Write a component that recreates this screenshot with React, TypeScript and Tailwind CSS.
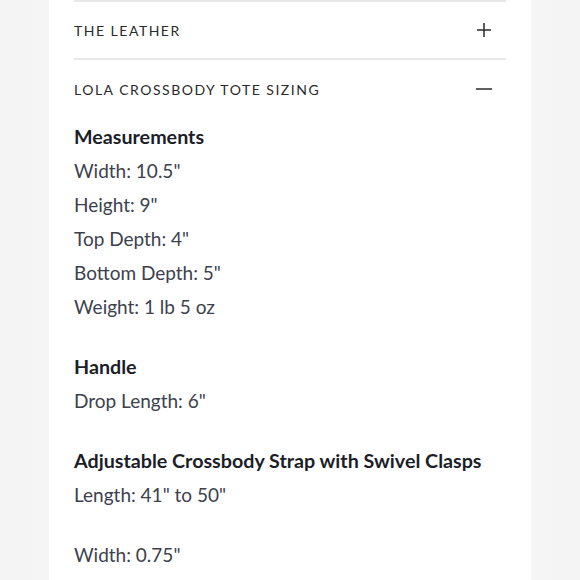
const sections = [
  {
    title: "Measurements",
    lines: ['Width: 10.5"', 'Height: 9"', 'Top Depth: 4"', 'Bottom Depth: 5"', "Weight: 1 lb 5 oz"],
  },
  { title: "Handle", lines: ['Drop Length: 6"'] },
  { title: "Adjustable Crossbody Strap with Swivel Clasps", lines: ['Length: 41" to 50"'] },
  { title: null, lines: ['Width: 0.75"'] },
];

function Plus() {
  return (
    <svg width="16" height="16" viewBox="0 0 16 16" className="text-[#2b2b2b]">
      <path d="M8 1v14M1 8h14" stroke="currentColor" strokeWidth="1.5" fill="none" />
    </svg>
  );
}

function Minus() {
  return (
    <svg width="16" height="16" viewBox="0 0 16 16" className="text-[#2b2b2b]">
      <path d="M0 8h16" stroke="currentColor" strokeWidth="1.5" fill="none" />
    </svg>
  );
}

export default function App() {
  return (
    <div className="flex h-[580px] w-[580px] justify-center overflow-hidden bg-gradient-to-r from-[#f4f4f4] via-[#fafafa] to-[#f4f4f4]">
      <div className="h-full w-[482px] bg-white px-[25px] font-['Lato','Liberation_Sans',sans-serif]">
        <div className="border-t-2 border-[#e8e8e8]">
          <div className="flex h-[58px] items-center justify-between border-b-2 border-[#e8e8e8] pr-[14px]">
            <span className="text-[14px] tracking-[1.5px] text-[#2a2a2a]">THE LEATHER</span>
            <Plus />
          </div>
          <div className="flex h-[58px] items-center justify-between pr-[14px]">
            <span className="text-[14px] tracking-[1.5px] text-[#2a2a2a]">LOLA CROSSBODY TOTE SIZING</span>
            <Minus />
          </div>
        </div>
        <div className="flex flex-col gap-[26px] pt-[2px] text-[19px] leading-[34px]">
          {sections.map((s, i) => (
            <div key={i}>
              {s.title && <div className="text-[19.7px] font-bold text-[#1b1e29]">{s.title}</div>}
              {s.lines.map((l) => (
                <div key={l} className="text-[#3c414d]">
                  {l}
                </div>
              ))}
            </div>
          ))}
        </div>
      </div>
    </div>
  );
}
